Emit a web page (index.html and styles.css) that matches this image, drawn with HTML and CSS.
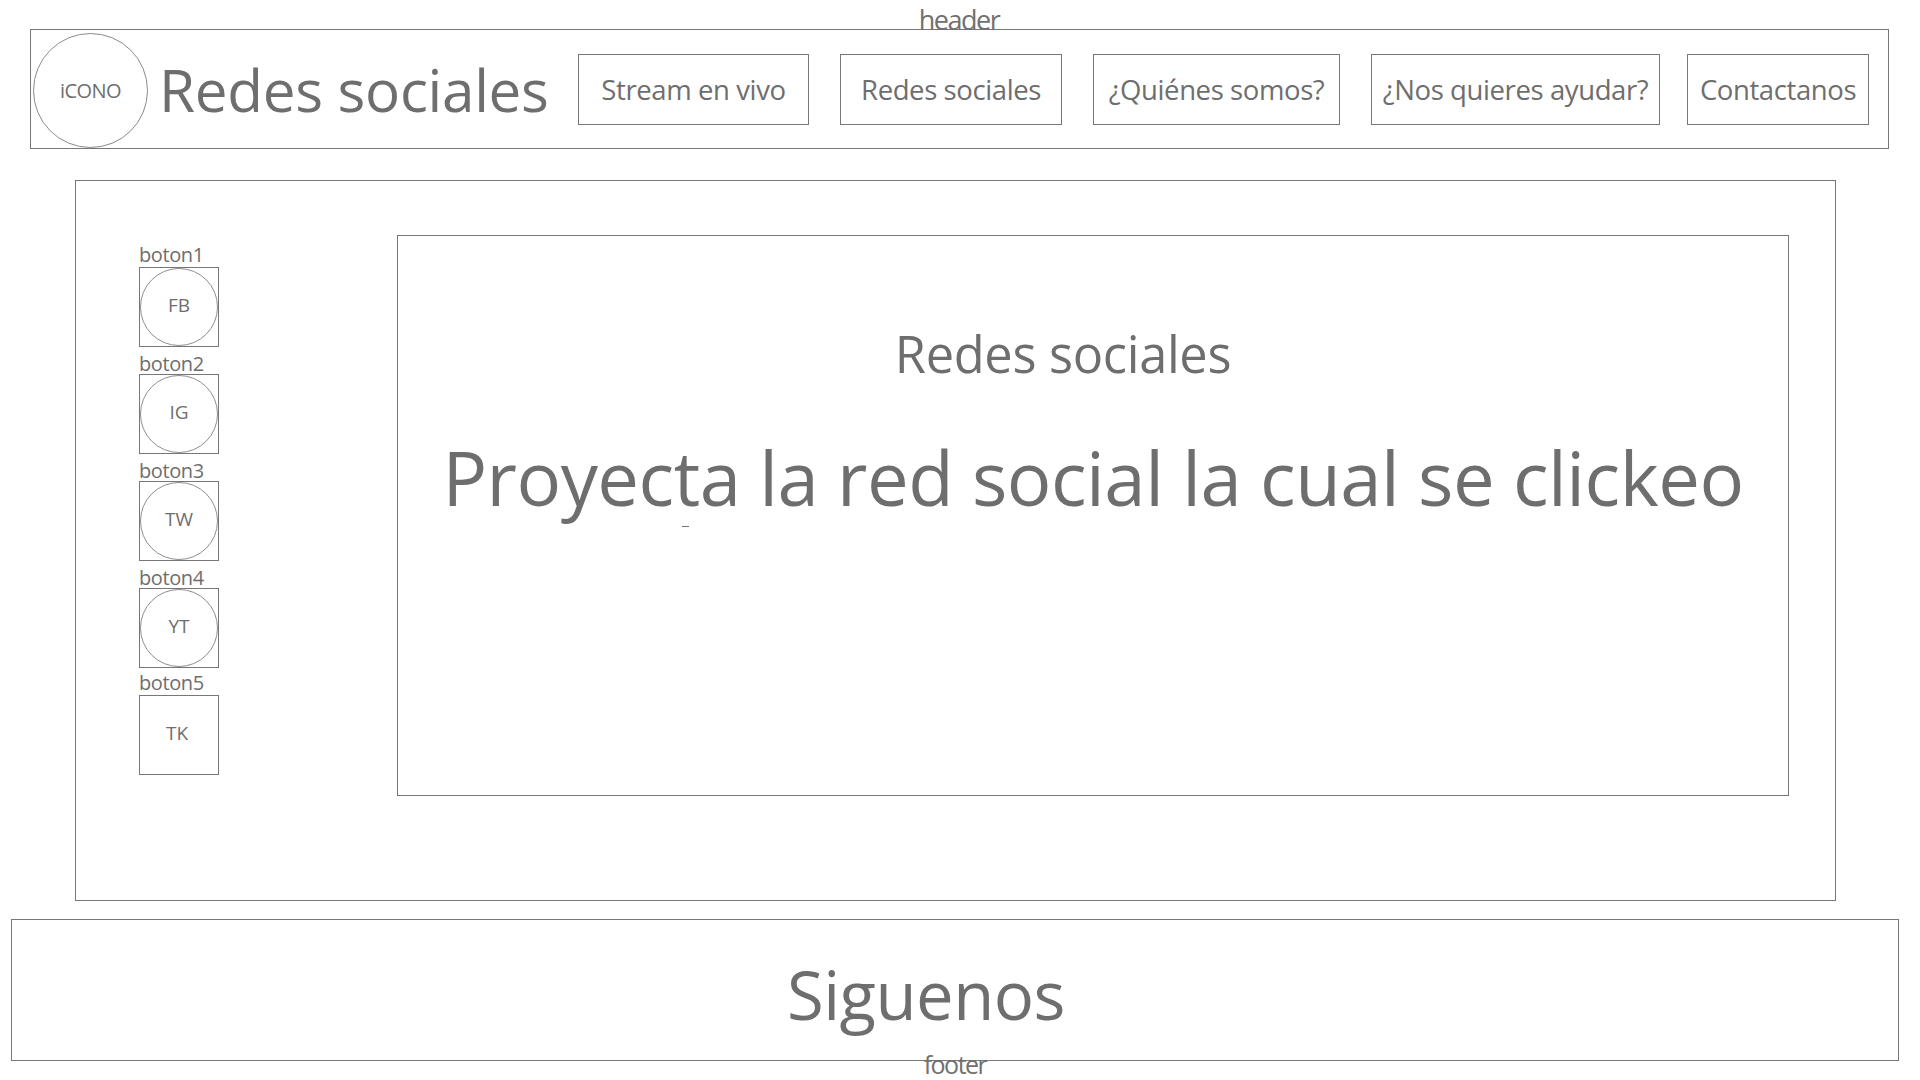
FILE: index.html
```html
<!DOCTYPE html>
<html lang="es">
<head>
<meta charset="utf-8">
<title>Redes sociales</title>
<link rel="stylesheet" href="styles.css">
</head>
<body>
<div class="area-label top-label">header</div>
<header class="site-header">
  <div class="logo-circle">iCONO</div>
  <h1 class="site-title">Redes sociales</h1>
  <nav class="nav">
    <a class="nav-btn">Stream en vivo</a>
    <a class="nav-btn">Redes sociales</a>
    <a class="nav-btn">¿Quiénes somos?</a>
    <a class="nav-btn">¿Nos quieres ayudar?</a>
    <a class="nav-btn">Contactanos</a>
  </nav>
</header>

<main class="main-box">
  <aside class="sidebar">
    <div class="social-item">
      <div class="social-label">boton1</div>
      <div class="social-box"><div class="social-circle">FB</div></div>
    </div>
    <div class="social-item">
      <div class="social-label">boton2</div>
      <div class="social-box"><div class="social-circle">IG</div></div>
    </div>
    <div class="social-item">
      <div class="social-label">boton3</div>
      <div class="social-box"><div class="social-circle">TW</div></div>
    </div>
    <div class="social-item">
      <div class="social-label">boton4</div>
      <div class="social-box"><div class="social-circle">YT</div></div>
    </div>
    <div class="social-item">
      <div class="social-label">boton5</div>
      <div class="social-box"><div class="social-plain">TK</div></div>
    </div>
  </aside>
  <section class="viewer">
    <h2 class="viewer-title">Redes sociales</h2>
    <p class="viewer-text">Proyecta la red social la cual se clickeo</p>
    <div class="stray-dash"></div>
  </section>
</main>

<footer class="site-footer">
  <div class="footer-text">Siguenos</div>
</footer>
<div class="area-label bottom-label">footer</div>
</body>
</html>
```
FILE: styles.css
```css
html, body {
  margin: 0;
  padding: 0;
  background: #ffffff;
}

body {
  font-family: "Open Sans", "Noto Sans", sans-serif;
  color: #6e6e6e;
  width: 1920px;
  min-height: 1080px;
}

.area-label {
  text-align: center;
  font-size: 27px;
  color: #707070;
  letter-spacing: -1.5px;
}

.top-label {
  height: 29px;
  line-height: 40px;
  padding-right: 2px;
}

.site-header {
  box-sizing: border-box;
  margin: 0 31px 0 30px;
  height: 120px;
  border: 1px solid #777;
  display: flex;
  align-items: center;
}

.logo-circle {
  box-sizing: border-box;
  width: 115px;
  height: 115px;
  margin-left: 2px;
  margin-top: 2px;
  border: 1px solid #8a8a8a;
  border-radius: 50%;
  display: flex;
  align-items: center;
  justify-content: center;
  font-size: 20px;
  letter-spacing: -0.6px;
  flex-shrink: 0;
}

.site-title {
  margin: 0 0 0 11px;
  font-weight: 400;
  font-size: 58.4px;
  letter-spacing: -0.3px;
  white-space: nowrap;
}

.nav {
  margin-left: auto;
  margin-right: 19px;
  display: flex;
  gap: 31px;
}

.nav-btn {
  box-sizing: border-box;
  height: 71px;
  display: flex;
  align-items: center;
  justify-content: center;
  border: 1px solid #777;
  font-size: 27.5px;
  letter-spacing: -0.4px;
  white-space: nowrap;
}

.nav-btn:nth-child(1) { width: 231px; }
.nav-btn:nth-child(2) { width: 222px; }
.nav-btn:nth-child(3) { width: 247px; }
.nav-btn:nth-child(4) { width: 289px; }
.nav-btn:nth-child(5) { width: 182px; margin-left: -4px; }

.main-box {
  box-sizing: border-box;
  margin: 31px 0 0 75px;
  width: 1761px;
  height: 721px;
  border: 1px solid #777;
  padding: 54px 46px 0 0;
  display: flex;
}

.sidebar {
  width: 321px;
  box-sizing: border-box;
  padding: 5px 0 0 63px;
  display: flex;
  flex-direction: column;
  flex-shrink: 0;
}

.social-item {
  display: flex;
  flex-direction: column;
  width: 80px;
}

.social-label {
  height: 27px;
  line-height: 29px;
  font-size: 20px;
  letter-spacing: -0.4px;
  white-space: nowrap;
}

.social-item:nth-child(2) .social-label,
.social-item:nth-child(3) .social-label,
.social-item:nth-child(4) .social-label {
  line-height: 33px;
}

.social-box {
  box-sizing: border-box;
  width: 80px;
  height: 80px;
  border: 1px solid #777;
  display: flex;
}

.social-circle,
.social-plain {
  box-sizing: border-box;
  width: 78px;
  height: 78px;
  display: flex;
  align-items: center;
  justify-content: center;
  font-size: 19px;
  padding-bottom: 4px;
}

.social-circle {
  border: 1px solid #8e8e8e;
  border-radius: 50%;
}

.social-plain {
  padding-right: 4px;
}

.viewer {
  box-sizing: border-box;
  width: 1392px;
  height: 561px;
  border: 1px solid #777;
  display: flex;
  flex-direction: column;
  align-items: center;
}

.viewer-title {
  margin: 88px 60px 0 0;
  font-weight: 400;
  font-size: 50.5px;
  line-height: 60px;
  letter-spacing: -0.3px;
}

.viewer-text {
  margin: 46px 0 0 0;
  font-size: 74.3px;
  line-height: 96px;
  letter-spacing: -0.5px;
  white-space: nowrap;
}

.stray-dash {
  align-self: flex-start;
  margin: 0 0 0 284px;
  width: 7px;
  height: 1px;
  background: #777;
}

.site-footer {
  box-sizing: border-box;
  margin: 18px 0 0 11px;
  width: 1888px;
  height: 142px;
  border: 1px solid #777;
  display: flex;
  align-items: center;
  justify-content: center;
}

.footer-text {
  margin: 8px 58px 0 0;
  font-size: 67px;
  letter-spacing: -0.5px;
}

.bottom-label {
  margin-top: -9px;
  padding-right: 10px;
  font-size: 25px;
  line-height: 24px;
}
```
